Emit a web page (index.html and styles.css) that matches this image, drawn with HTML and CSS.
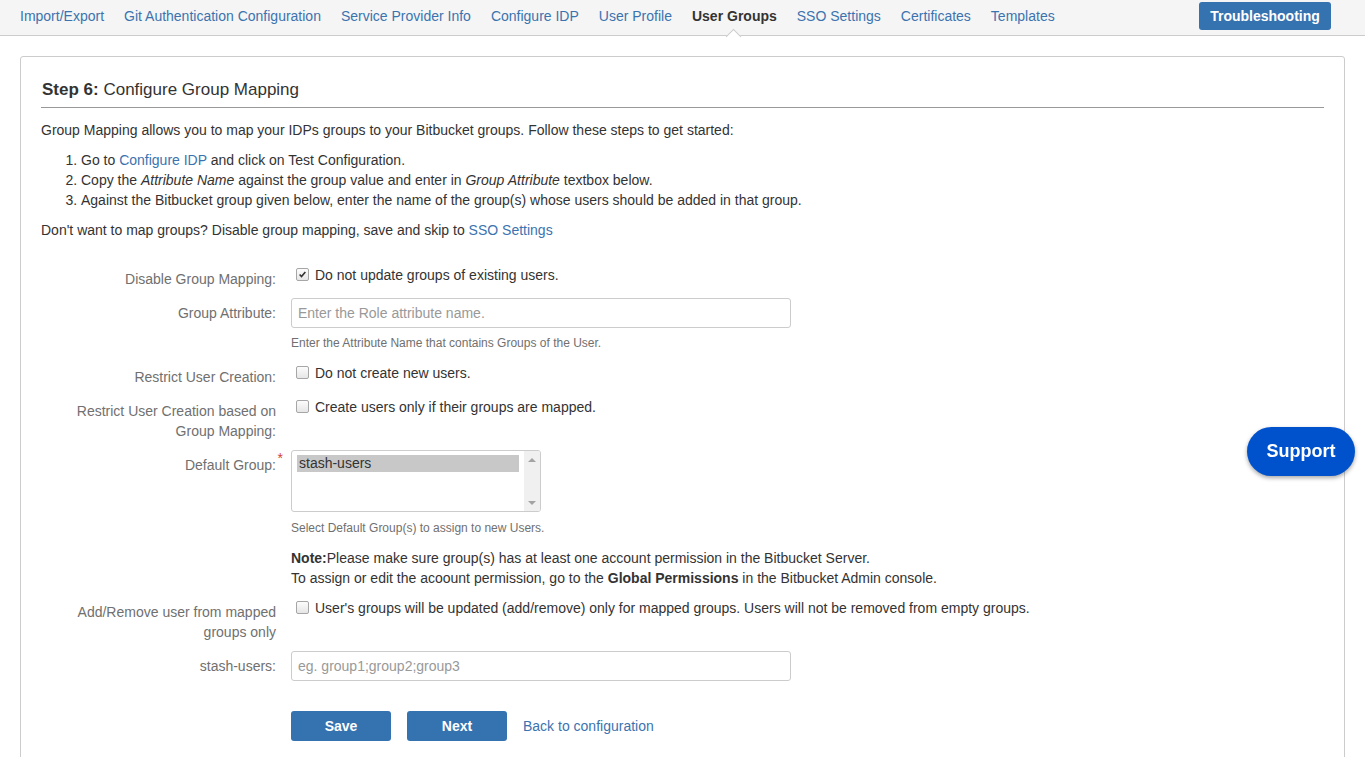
FILE: index.html
```html
<!DOCTYPE html>
<html>
<head>
<meta charset="utf-8">
<title>Configure Group Mapping</title>
<link rel="stylesheet" href="styles.css">
</head>
<body>
<nav class="topnav">
  <ul class="tabs">
    <li><a href="#">Import/Export</a></li>
    <li><a href="#">Git Authentication Configuration</a></li>
    <li><a href="#">Service Provider Info</a></li>
    <li><a href="#">Configure IDP</a></li>
    <li><a href="#">User Profile</a></li>
    <li class="active"><a href="#">User Groups</a></li>
    <li><a href="#">SSO Settings</a></li>
    <li><a href="#">Certificates</a></li>
    <li><a href="#">Templates</a></li>
  </ul>
  <button class="btn-trouble">Troubleshooting</button>
</nav>

<div class="panel">
  <h2 class="step-title"><b>Step 6:</b> Configure Group Mapping</h2>
  <p class="intro">Group Mapping allows you to map your IDPs groups to your Bitbucket groups. Follow these steps to get started:</p>
  <ol class="steps">
    <li>Go to <a href="#">Configure IDP</a> and click on Test Configuration.</li>
    <li>Copy the <i>Attribute Name</i> against the group value and enter in <i>Group Attribute</i> textbox below.</li>
    <li>Against the Bitbucket group given below, enter the name of the group(s) whose users should be added in that group.</li>
  </ol>
  <p class="skip">Don't want to map groups? Disable group mapping, save and skip to <a href="#">SSO Settings</a></p>

  <form class="form">
    <div class="field">
      <label class="flabel">Disable Group Mapping:</label>
      <div class="fctrl check-row"><span class="cb checked"><svg viewBox="0 0 11 11" width="11" height="11"><path d="M2 5.5 L4.3 8 L9 2.5" fill="none" stroke="#333" stroke-width="2"/></svg></span><span>Do not update groups of existing users.</span></div>
    </div>
    <div class="field">
      <label class="flabel">Group Attribute:</label>
      <div class="fctrl">
        <input class="text" type="text" placeholder="Enter the Role attribute name.">
        <div class="help">Enter the Attribute Name that contains Groups of the User.</div>
      </div>
    </div>
    <div class="field">
      <label class="flabel">Restrict User Creation:</label>
      <div class="fctrl check-row"><span class="cb"></span><span>Do not create new users.</span></div>
    </div>
    <div class="field">
      <label class="flabel">Restrict User Creation based on Group Mapping:</label>
      <div class="fctrl check-row"><span class="cb"></span><span>Create users only if their groups are mapped.</span></div>
    </div>
    <div class="field">
      <label class="flabel"><span class="req-wrap">Default Group:<sup class="req">*</sup></span></label>
      <div class="fctrl">
        <div class="listbox">
          <div class="options"><div class="opt selected">stash-users</div></div>
          <div class="sbar"><span class="arr up"></span><span class="arr down"></span></div>
        </div>
        <div class="help help-sel">Select Default Group(s) to assign to new Users.</div>
        <div class="note"><b>Note:</b>Please make sure group(s) has at least one account permission in the Bitbucket Server.<br>To assign or edit the acoount permission, go to the <b>Global Permissions</b> in the Bitbucket Admin console.</div>
      </div>
    </div>
    <div class="field">
      <label class="flabel">Add/Remove user from mapped groups only</label>
      <div class="fctrl check-row"><span class="cb"></span><span>User's groups will be updated (add/remove) only for mapped groups. Users will not be removed from empty groups.</span></div>
    </div>
    <div class="field">
      <label class="flabel">stash-users:</label>
      <div class="fctrl"><input class="text" type="text" placeholder="eg. group1;group2;group3"></div>
    </div>
    <div class="actions">
      <button type="button" class="btn">Save</button>
      <button type="button" class="btn">Next</button>
      <a href="#" class="back">Back to configuration</a>
    </div>
  </form>
</div>

<button class="support">Support</button>
</body>
</html>
```
FILE: styles.css
```css
html { overflow: hidden; }
body {
  margin: 0;
  font-family: "Liberation Sans", Arial, sans-serif;
  font-size: 14px;
  color: #333;
  background: #fff;
}
a { color: #3b73af; text-decoration: none; }

.topnav {
  height: 35px;
  background: #f5f5f5;
  border-bottom: 1px solid #ccc;
  display: flex;
  align-items: flex-start;
  justify-content: space-between;
  padding: 0 34px 0 20px;
}
.tabs {
  list-style: none;
  margin: 0;
  padding: 0;
  display: flex;
  gap: 20px;
  height: 35px;
}
.tabs li {
  position: relative;
  line-height: 33px;
}
.tabs li.active a { color: #333; font-weight: bold; }
.tabs li.active::after {
  content: "";
  position: absolute;
  left: 50%;
  bottom: -7px;
  width: 10px;
  height: 10px;
  margin-left: -6px;
  background: #fff;
  border-top: 1px solid #ccc;
  border-left: 1px solid #ccc;
  transform: rotate(45deg);
}
.btn-trouble {
  margin-top: 2px;
  width: 132px;
  height: 28px;
  background: #3572b0;
  color: #fff;
  border: 0;
  border-radius: 3px;
  font-family: "Liberation Sans", Arial, sans-serif;
  font-weight: bold;
  font-size: 14px;
}

.panel {
  margin: 20px 20px 0 20px;
  border: 1px solid #ccc;
  border-radius: 3px;
  padding: 22px 20px 40px 20px;
}
.step-title {
  margin: 0;
  font-size: 17px;
  font-weight: normal;
  line-height: 20px;
  padding: 1px 0 7px 1px;
  border-bottom: 1px solid #999;
}
.intro { margin: 12px 0 0; line-height: 20px; }
.steps { margin: 10px 0 0; padding-left: 40px; line-height: 20px; }
.skip { margin: 10px 0 0; line-height: 20px; }

.form { margin-top: 22px; }
.field {
  display: flex;
  padding: 2px 0;
}
.flabel {
  width: 250px;
  flex: none;
  box-sizing: border-box;
  padding: 5px 15px 5px 0;
  text-align: right;
  line-height: 20px;
  color: #707070;
}
.req-wrap { position: relative; }
.req {
  position: absolute;
  right: -7px;
  top: -6px;
  color: #d04437;
  font-size: 14px;
  line-height: 14px;
}
.fctrl { flex: 1; }
.check-row {
  display: flex;
  align-items: flex-start;
  padding-top: 1px;
  line-height: 20px;
}
.cb {
  flex: none;
  box-sizing: border-box;
  width: 13px;
  height: 13px;
  margin: 3px 6px 0 5px;
  border: 1px solid #a6a6a6;
  border-radius: 2px;
  background: linear-gradient(#fcfcfc, #e6e6e6);
  display: flex;
  align-items: center;
  justify-content: center;
}
.cb svg { display: block; width: 9px; height: 9px; }
input.text {
  display: block;
  box-sizing: border-box;
  width: 500px;
  height: 30px;
  margin: 0;
  border: 1px solid #ccc;
  border-radius: 3px;
  padding: 0 6px;
  font-family: "Liberation Sans", Arial, sans-serif;
  font-size: 14px;
  color: #333;
}
input.text::placeholder { color: #999; }
.help {
  margin: 7px 0 7px;
  font-size: 12px;
  line-height: 16px;
  color: #707070;
}
.help-sel { margin: 8px 0 0; }

.listbox {
  margin-top: 0;
  width: 250px;
  height: 62px;
  box-sizing: border-box;
  border: 1px solid #ccc;
  border-radius: 3px;
  display: flex;
  overflow: hidden;
}
.options { flex: 1; padding: 4px 5px 0 5px; }
.opt { height: 17px; line-height: 17px; padding-left: 2px; color: #333; }
.opt.selected { background: #c8c8c8; }
.sbar {
  width: 16px;
  background: #f0f0f0;
  display: flex;
  flex-direction: column;
  justify-content: space-between;
  align-items: center;
  padding: 7px 0 6px;
}
.arr { width: 0; height: 0; border-left: 4px solid transparent; border-right: 4px solid transparent; }
.arr.up { border-bottom: 4px solid #a3a3a3; }
.arr.down { border-top: 4px solid #a3a3a3; }
.note { margin: 12px 0 5px; line-height: 20px; color: #333; }

.actions {
  display: flex;
  align-items: center;
  margin: 28px 0 0 250px;
  gap: 16px;
}
.btn {
  width: 100px;
  height: 30px;
  border: 0;
  border-radius: 3px;
  background: #3572b0;
  color: #fff;
  font-family: "Liberation Sans", Arial, sans-serif;
  font-weight: bold;
  font-size: 14px;
}

.support {
  position: fixed;
  top: 427px;
  right: 10px;
  width: 108px;
  height: 49px;
  border: 0;
  border-radius: 25px;
  background: #0052cc;
  color: #fff;
  font-family: "Liberation Sans", Arial, sans-serif;
  font-weight: bold;
  font-size: 18px;
  box-shadow: 0 2px 4px rgba(0,0,0,0.35);
}
```
